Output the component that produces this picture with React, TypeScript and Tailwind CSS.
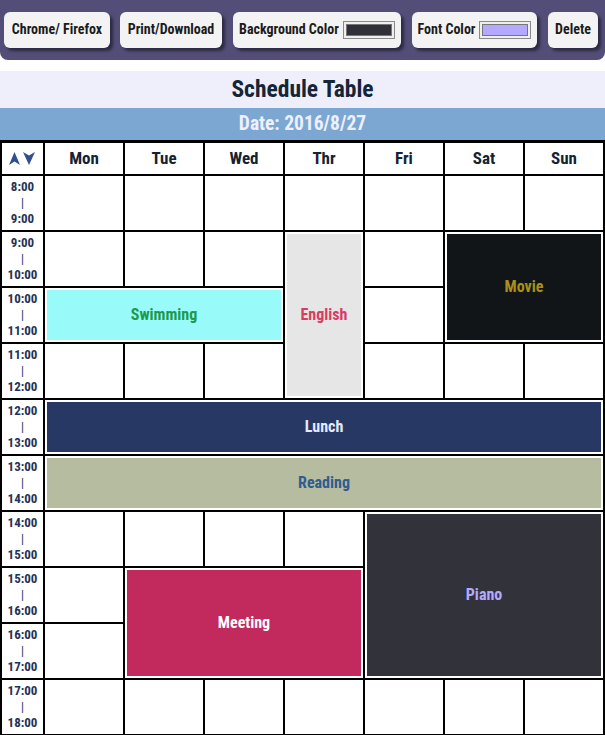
import React from "react"

const days = ["Mon", "Tue", "Wed", "Thr", "Fri", "Sat", "Sun"]
const hours = [8, 9, 10, 11, 12, 13, 14, 15, 16, 17]

// grid rows: 1 = header, hour index i -> row i + 2; day index d -> col d + 2
const events = [
  { label: "Swimming", day: 0, hour: 2, cs: 3, rs: 1, place: "col-start-2 row-start-4 col-span-3 row-span-1", box: "bg-[#99fbf9] text-[#1b9a4b]" },
  { label: "English", day: 3, hour: 1, cs: 1, rs: 3, place: "col-start-5 row-start-3 col-span-1 row-span-3", box: "bg-[#e6e6e6] text-[#d93c63]" },
  { label: "Movie", day: 5, hour: 1, cs: 2, rs: 2, place: "col-start-7 row-start-3 col-span-2 row-span-2", box: "bg-[#111518] text-[#a8901b]" },
  { label: "Lunch", day: 0, hour: 4, cs: 7, rs: 1, place: "col-start-2 row-start-6 col-span-7 row-span-1", box: "bg-[#283864] text-[#e4ebff]" },
  { label: "Reading", day: 0, hour: 5, cs: 7, rs: 1, place: "col-start-2 row-start-7 col-span-7 row-span-1", box: "bg-[#b6bca0] text-[#2f5d8e]" },
  { label: "Piano", day: 4, hour: 6, cs: 3, rs: 3, place: "col-start-6 row-start-8 col-span-3 row-span-3", box: "bg-[#32323a] text-[#b3aaff]" },
  { label: "Meeting", day: 1, hour: 7, cs: 3, rs: 2, place: "col-start-3 row-start-9 col-span-3 row-span-2", box: "bg-[#c2295c] text-white" },
]

const font = "font-['Roboto_Condensed','DejaVu_Sans_Condensed','Roboto',sans-serif]"

function Swatch({ color }: { color: string }) {
  return (
    <span className="inline-flex h-[18px] w-[52px] shrink-0 items-center border border-[#8a8a8a] bg-[#efefef] p-[2px]">
      <span className={`block h-full w-full border border-[#777] ${color}`} />
    </span>
  )
}

function ToolButton({ w, children }: { w: string; children: React.ReactNode }) {
  return (
    <button
      className={`flex h-[36px] shrink-0 items-center justify-center gap-1 whitespace-nowrap rounded-[6px] bg-[#f3f3f3] text-[14px] font-bold text-[#1b1b1b] shadow-[3px_3px_3px_#2c2a45] ${w}`}
    >
      {children}
    </button>
  )
}

function Arrows() {
  return (
    <div className="flex items-center gap-[3px] pr-[2px]">
      <svg width="11" height="13" viewBox="0 0 11 13">
        <polygon points="5.5,0 11,13 5.5,9.5 0,13" fill="#2f4f8f" />
      </svg>
      <svg width="12" height="13" viewBox="0 0 12 13">
        <polygon points="0,0 6,3.5 12,0 6,13" fill="#2f4f8f" />
      </svg>
    </div>
  )
}

export default function App() {
  const taken = new Set<string>()
  events.forEach((e) => {
    for (let h = e.hour; h < e.hour + e.rs; h++)
      for (let d = e.day; d < e.day + e.cs; d++) taken.add(`${h}-${d}`)
  })

  return (
    <div className={`w-[605px] bg-white ${font}`}>
      {/* toolbar */}
      <div className="flex h-[60px] items-center gap-[11px] rounded-b-[8px] bg-[#524e78] pl-[4px] pb-[1px]">
        <ToolButton w="w-[106px] -mr-[1px]">Chrome/ Firefox</ToolButton>
        <ToolButton w="w-[102px]">Print/Download</ToolButton>
        <ToolButton w="w-[168px]">
          Background Color <Swatch color="bg-[#303038]" />
        </ToolButton>
        <ToolButton w="w-[125px]">
          Font Color <Swatch color="bg-[#b3aaff]" />
        </ToolButton>
        <ToolButton w="w-[50px]">Delete</ToolButton>
      </div>

      {/* titles */}
      <div className="mt-[11px] flex h-[37px] items-center justify-center bg-[#efeefb] text-[23.5px] font-bold text-[#142536]">
        Schedule Table
      </div>
      <div className="flex h-[32px] items-center justify-center bg-[#7ca7d2] text-[19.5px] font-bold text-[#eef0ff]">
        Date: 2016/8/27
      </div>

      {/* table */}
      <div className="grid grid-cols-[41px_repeat(7,78px)] grid-rows-[31px_repeat(10,54px)] gap-[2px] bg-black p-[2px] pt-[3px]">
        <div className="flex items-center justify-center bg-white">
          <Arrows />
        </div>
        {days.map((d) => (
          <div key={d} className="flex items-center justify-center bg-white text-[17px] font-bold text-[#152232]">
            {d}
          </div>
        ))}

        {hours.map((h, hi) => (
          <React.Fragment key={h}>
            <div className="flex flex-col items-center justify-center bg-white text-[13px] font-bold leading-[16px] text-[#1f3358]">
              <span>{h}:00</span>
              <span className="text-[12px] font-normal">|</span>
              <span>{h + 1}:00</span>
            </div>
            {days.map((_, di) =>
              taken.has(`${hi}-${di}`) ? null : <div key={di} className="bg-white" />
            )}
          </React.Fragment>
        ))}

        {events.map((e) => (
          <div key={e.label} className={`bg-white p-[2px] ${e.place}`}>
            <div className={`flex h-full w-full items-center justify-center text-[16px] font-bold ${e.box}`}>
              {e.label}
            </div>
          </div>
        ))}
      </div>
    </div>
  )
}
